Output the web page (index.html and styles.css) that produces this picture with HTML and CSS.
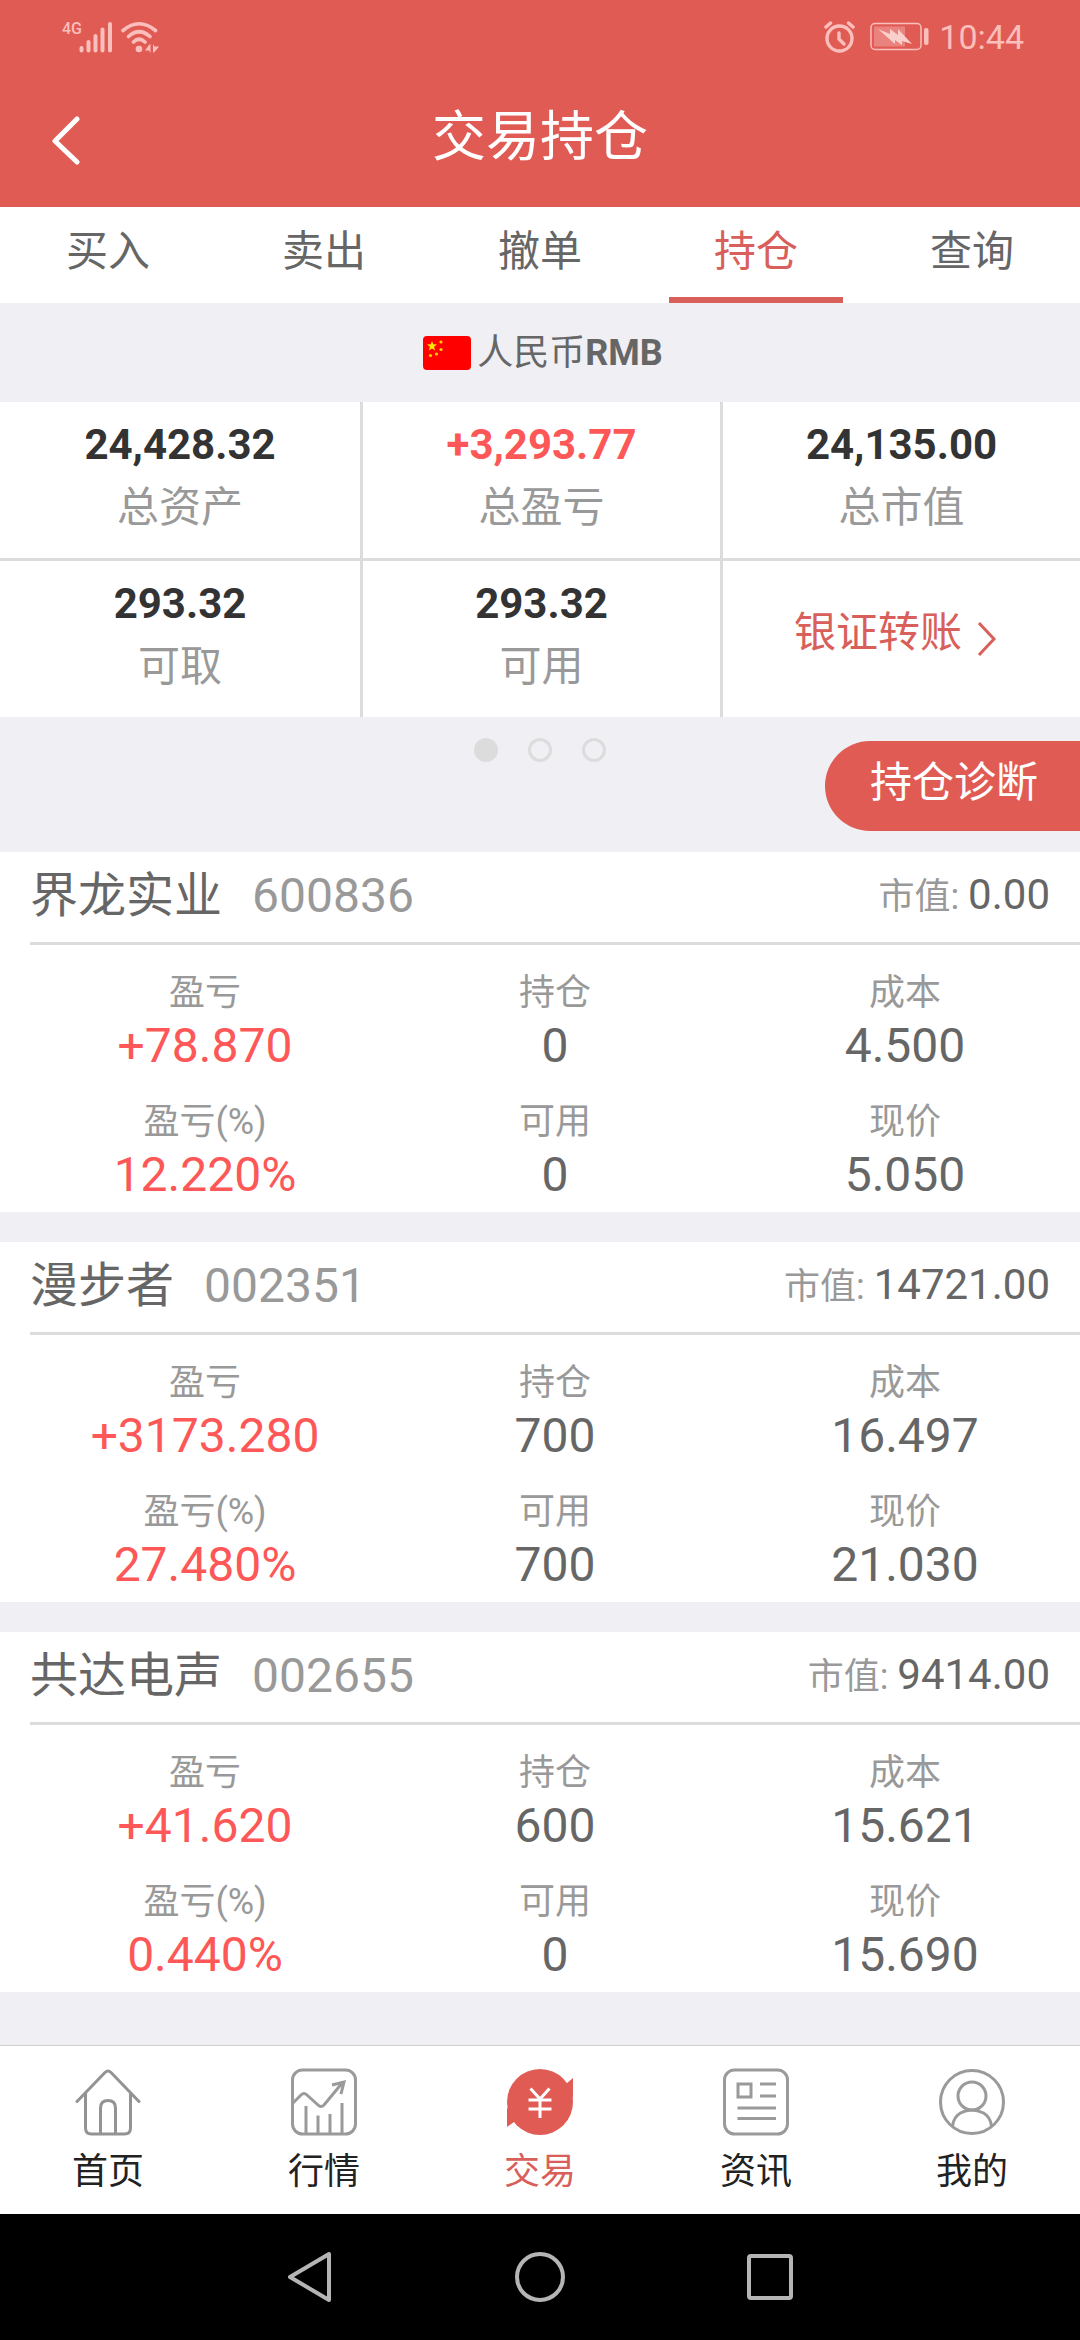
FILE: index.html
```html
<!DOCTYPE html>
<html lang="zh-CN">
<head>
    <meta charset="UTF-8">
    <meta name="viewport" content="width=device-width, initial-scale=1.0">
    <title>交易持仓</title>
    <link rel="stylesheet" href="styles.css">
</head>
<body>
    <header class="header">
        <div class="status-bar">
            <span class="network">4G</span>
            <svg class="signal" width="34" height="32" viewBox="0 0 34 32" stroke="#fbbfbb" stroke-width="4" stroke-linecap="round">
                <path d="M2.500 27v2.500M9.500 21v8.500M16.500 15v14.500M23.500 8.500v21M31 3v26.500"/>
            </svg>
            <svg class="wifi" width="38" height="32" viewBox="0 0 38 32" fill="none" stroke="#fbbfbb" stroke-width="3.600" stroke-linecap="round">
                <path d="M2 9.500Q18-4 34.500 9.500M7.500 15.500Q18 6 29 15.500M12.500 21Q18 15.500 24 21"/>
                <circle cx="18" cy="28" r="3.300" fill="#fbbfbb" stroke="none"/>
                <path d="M29.500 23v9l-1.500-2.500h-4l4-5.500zM32 23l1.500 2.500H38l-3.500 4.500L32 32z" fill="#fbbfbb" stroke="none"/>
            </svg>
            <svg class="alarm" width="32" height="32" viewBox="0 0 32 32" fill="none" stroke="#fbbfbb" stroke-width="3.400" stroke-linecap="round">
                <circle cx="15.500" cy="17.500" r="12.500"/>
                <path d="M2 6l4.500-4M29 6l-4.500-4M15 12v6l5 5"/>
            </svg>
            <svg class="battery" width="59" height="30" viewBox="0 0 59 30">
                <rect x="1" y="1.500" width="50" height="26" rx="4" fill="none" stroke="#fbbfbb" stroke-width="1.500"/>
                <rect x="4" y="4.500" width="31" height="20" fill="#ea827d"/>
                <path d="M8 7l12 5V7l8 6V7l14 15-10-3v4l-7-5v4z" fill="#fad0cd"/>
                <rect x="54" y="6" width="4.500" height="17" rx="2" fill="#fbbfbb"/>
            </svg>
            <span class="time">10:44</span>
        </div>
        <div class="title-bar">
            <button class="back" type="button" aria-label="返回">
                <svg width="30" height="50" viewBox="0 0 30 50" fill="none" stroke="#fff" stroke-width="5" stroke-linecap="round" stroke-linejoin="round">
                    <path d="M26 3L4 25 26 46"/>
                </svg>
            </button>
            <h1>交易持仓</h1>
        </div>
    </header>

    <nav class="tabs">
        <a href="#">买入</a>
        <a href="#">卖出</a>
        <a href="#">撤单</a>
        <a href="#" class="active">持仓</a>
        <a href="#">查询</a>
    </nav>

    <main>
        <div class="currency">
            <svg width="48" height="34" viewBox="0 0 48 34">
                <rect width="48" height="34" rx="4" fill="#fe0000"/>
                <path d="M9 5l1.300 3.300 3.700.2-2.900 2.300 1 3.600L9 12.400l-3.100 2 1-3.600L4 8.500l3.700-.2z" fill="#ffe600"/>
                <g fill="#ffd000">
                    <circle cx="18" cy="6" r="1.600"/>
                    <circle cx="18" cy="13.500" r="1.600"/>
                    <circle cx="13.500" cy="18" r="1.600"/>
                    <circle cx="7.500" cy="19.500" r="1.600"/>
                </g>
            </svg>
            <span>人民币<b>RMB</b></span>
        </div>

        <dl class="summary">
            <div><dd>24,428.32</dd><dt>总资产</dt></div>
            <div><dd class="up">+3,293.77</dd><dt>总盈亏</dt></div>
            <div><dd>24,135.00</dd><dt>总市值</dt></div>
            <div><dd>293.32</dd><dt>可取</dt></div>
            <div><dd>293.32</dd><dt>可用</dt></div>
            <div class="transfer">
                <dd>
                    <a href="#">银证转账
                        <svg width="20" height="36" viewBox="0 0 20 36" fill="none" stroke="#d9605a" stroke-width="3">
                            <path d="M2 2l15 16L2 34"/>
                        </svg>
                    </a>
                </dd>
            </div>
        </dl>

        <div class="pager">
            <div class="dots">
                <button type="button" class="dot current" aria-label="1"></button>
                <button type="button" class="dot" aria-label="2"></button>
                <button type="button" class="dot" aria-label="3"></button>
            </div>
            <button type="button" class="diagnose">持仓诊断</button>
        </div>

        <section class="holding">
            <div class="holding-head">
                <h2>界龙实业</h2>
                <span class="code">600836</span>
                <span class="market">市值: <b>0.00</b></span>
            </div>
            <dl class="stats">
                <div><dt>盈亏</dt><dd class="up">+78.870</dd></div>
                <div><dt>持仓</dt><dd>0</dd></div>
                <div><dt>成本</dt><dd>4.500</dd></div>
                <div><dt>盈亏(%)</dt><dd class="up">12.220%</dd></div>
                <div><dt>可用</dt><dd>0</dd></div>
                <div><dt>现价</dt><dd>5.050</dd></div>
            </dl>
        </section>

        <section class="holding">
            <div class="holding-head">
                <h2>漫步者</h2>
                <span class="code">002351</span>
                <span class="market">市值: <b>14721.00</b></span>
            </div>
            <dl class="stats">
                <div><dt>盈亏</dt><dd class="up">+3173.280</dd></div>
                <div><dt>持仓</dt><dd>700</dd></div>
                <div><dt>成本</dt><dd>16.497</dd></div>
                <div><dt>盈亏(%)</dt><dd class="up">27.480%</dd></div>
                <div><dt>可用</dt><dd>700</dd></div>
                <div><dt>现价</dt><dd>21.030</dd></div>
            </dl>
        </section>

        <section class="holding">
            <div class="holding-head">
                <h2>共达电声</h2>
                <span class="code">002655</span>
                <span class="market">市值: <b>9414.00</b></span>
            </div>
            <dl class="stats">
                <div><dt>盈亏</dt><dd class="up">+41.620</dd></div>
                <div><dt>持仓</dt><dd>600</dd></div>
                <div><dt>成本</dt><dd>15.621</dd></div>
                <div><dt>盈亏(%)</dt><dd class="up">0.440%</dd></div>
                <div><dt>可用</dt><dd>0</dd></div>
                <div><dt>现价</dt><dd>15.690</dd></div>
            </dl>
        </section>
    </main>

    <nav class="bottom-nav">
        <a href="#">
            <svg width="66" height="68" viewBox="0 0 66 68" fill="none" stroke="#939393" stroke-width="3" stroke-linecap="round">
                <path d="M2 33.500L30 4.500q3-3 6 0l28 29"/>
                <path d="M10.500 26v34q0 6 6 6h33q6 0 6-6V26M25.500 65V40q0-7.500 7.500-7.500t7.500 7.500v25"/>
            </svg>
            <span>首页</span>
        </a>
        <a href="#">
            <svg width="66" height="68" viewBox="0 0 66 68" fill="none" stroke="#9a9a9a" stroke-width="3">
                <rect x="1.500" y="2" width="63" height="64" rx="10"/>
                <path d="M2 35l8-8q3-3 6 0l11 10q3 3 6 0l19-23M41 17l12-3-3 12"/>
                <path d="M15 38v27M27 47.500v17.500M39 46v19M51 35v30"/>
            </svg>
            <span>行情</span>
        </a>
        <a href="#" class="active">
            <svg width="68" height="68" viewBox="0 0 68 68">
                <circle cx="34" cy="34" r="33" fill="#e15b55"/>
                <path d="M1 40v19l7-5 8-8zM60 16l7-6v17l-1 7z" fill="#e15b55"/>
                <path d="M24.500 20.500L34 31l9.500-10.500M34 31v19M22.500 32h23M22.500 41h23" fill="none" stroke="#fff" stroke-width="3"/>
            </svg>
            <span>交易</span>
        </a>
        <a href="#">
            <svg width="66" height="68" viewBox="0 0 66 68" fill="none" stroke="#9a9a9a" stroke-width="3">
                <rect x="1.500" y="2" width="63" height="64" rx="10"/>
                <path d="M15 16h13v13H15zM37 16h16M37 28h16M14.500 40H53M14.500 50.500H53"/>
            </svg>
            <span>资讯</span>
        </a>
        <a href="#">
            <svg width="66" height="68" viewBox="0 0 66 68" fill="none" stroke="#9a9a9a" stroke-width="3">
                <circle cx="33" cy="34" r="31.500"/>
                <circle cx="33" cy="28" r="14"/>
                <path d="M13.500 58q1-9 8-13 11-6 23 0 7 4 8 13"/>
            </svg>
            <span>我的</span>
        </a>
    </nav>

    <div class="system-nav">
        <button type="button" aria-label="back">
            <svg width="54" height="54" viewBox="0 0 54 54" fill="none" stroke="#b5b5b5" stroke-width="4" stroke-linejoin="round">
                <path d="M46 4v46L7 27z"/>
            </svg>
        </button>
        <button type="button" aria-label="home">
            <svg width="54" height="54" viewBox="0 0 54 54" fill="none" stroke="#b5b5b5" stroke-width="4">
                <circle cx="27" cy="27" r="23"/>
            </svg>
        </button>
        <button type="button" aria-label="recent">
            <svg width="54" height="54" viewBox="0 0 54 54" fill="none" stroke="#b5b5b5" stroke-width="4">
                <rect x="6" y="6" width="42" height="42" rx="2"/>
            </svg>
        </button>
    </div>
</body>
</html>
```
FILE: styles.css
```css
* {
    box-sizing: border-box;
}

body {
    display: flex;
    flex-direction: column;
    min-height: 100vh;
    margin: 0;
    background-color: #efeff4;
    color: #666;
    font-family: Roboto, "Noto Sans CJK SC", sans-serif;
    font-size: 36px;
}

h1, h2, dl, dd {
    margin: 0;
    font-weight: 400;
}

a {
    color: inherit;
    text-decoration: none;
}

button {
    padding: 0;
    border: none;
    background: none;
    font: inherit;
    color: inherit;
    cursor: pointer;
}

svg {
    display: block;
    flex: none;
}

main {
    flex: 1;
}

/* header */
.header {
    background-color: #e15b55;
    color: #fff;
}

.status-bar {
    display: flex;
    align-items: center;
    height: 74px;
    padding: 0 56px 0 62px;
    color: #fbbfbb;
}

.network {
    align-self: flex-start;
    padding-top: 20px;
    font-size: 16px;
    font-weight: 500;
    line-height: 18px;
}

.signal {
    margin-left: -3px;
}

.wifi {
    margin-left: 8px;
}

.alarm {
    margin-left: auto;
}

.battery {
    margin: 0 10px 0 14px;
}

.time {
    font-size: 34px;
}

.title-bar {
    display: grid;
    grid-template-columns: 132px 1fr 132px;
    height: 133px;
}

.back {
    padding-left: 51px;
}

.title-bar h1 {
    font-size: 54px;
    line-height: 128px;
    text-align: center;
}

/* tabs */
.tabs {
    display: grid;
    grid-template-columns: repeat(5, 1fr);
    background-color: #fff;
    font-size: 42px;
    line-height: 90px;
    text-align: center;
}

.tabs a {
    margin: 0 21px;
    border-bottom: 6px solid transparent;
}

.tabs .active {
    border-color: #d9605a;
    color: #d9605a;
}

.currency {
    display: flex;
    align-items: center;
    justify-content: center;
    gap: 6px;
    height: 99px;
    padding-left: 6px;
    line-height: 48px;
}

/* account summary */
.summary {
    display: grid;
    grid-template-columns: repeat(3, 1fr);
    row-gap: 3px;
    background-color: #dcdcdc;
    font-size: 42px;
    text-align: center;
}

.summary div {
    display: flex;
    flex-direction: column;
    gap: 12px;
    padding: 19px 0 23px;
    background-color: #fff;
}

.summary div:not(:nth-child(3n + 1)) {
    border-left: 3px solid #dcdcdc;
}

.summary dd {
    color: #333;
    font-weight: 700;
    line-height: 48px;
}

.summary dt {
    color: #999;
    line-height: 54px;
}

.summary .transfer {
    justify-content: center;
    padding: 18px 12px 30px 0;
}

.transfer a {
    display: flex;
    align-items: flex-end;
    justify-content: center;
    gap: 15px;
    color: #d9605a;
    font-weight: 400;
}

.summary .up,
.stats .up {
    color: #fd5757;
}

/* pager */
.pager {
    display: grid;
    grid-template-columns: 1fr auto 1fr;
    align-items: start;
    height: 135px;
}

.dots {
    display: flex;
    grid-column: 2;
    gap: 30px;
    padding-top: 21px;
}

.dot {
    width: 24px;
    height: 24px;
    border: 3px solid #dcdcdc;
    border-radius: 50%;
}

.dot.current {
    background-color: #dcdcdc;
}

.diagnose {
    justify-self: end;
    margin-top: 24px;
    padding: 0 42px 6px 45px;
    border-radius: 45px 0 0 45px;
    background-color: #e15b55;
    color: #fff;
    font-size: 42px;
    line-height: 84px;
}

/* holdings */
.holding {
    margin-bottom: 30px;
    padding-left: 30px;
    background-color: #fff;
}

.holding-head {
    display: flex;
    align-items: center;
    gap: 30px;
    height: 93px;
    padding: 0 30px 3px 0;
    border-bottom: 3px solid #dcdcdc;
    line-height: 84px;
}

.holding-head h2,
.code {
    font-size: 48px;
}

.code,
.market {
    color: #999;
}

.market {
    margin-left: auto;
}

.market b {
    color: #666;
    font-size: 42px;
    font-weight: 400;
}

.stats {
    display: grid;
    grid-template-columns: repeat(3, 1fr);
    row-gap: 24px;
    padding: 24px 0 9px;
    text-align: center;
}

.stats dt {
    color: #999;
    line-height: 48px;
}

.stats dd {
    font-size: 48px;
    line-height: 57px;
}

/* bottom navigation */
.bottom-nav {
    display: grid;
    grid-template-columns: repeat(5, 1fr);
    border-top: 1px solid #d0d0d3;
    background-color: #fff;
    color: #222;
}

.bottom-nav a {
    display: flex;
    flex-direction: column;
    align-items: center;
    gap: 12px;
    padding: 22px 0 18px;
    line-height: 48px;
}

.bottom-nav .active {
    color: #d9605a;
}

.system-nav {
    display: flex;
    align-items: center;
    justify-content: center;
    gap: 176px;
    height: 126px;
    background-color: #000;
}
```
